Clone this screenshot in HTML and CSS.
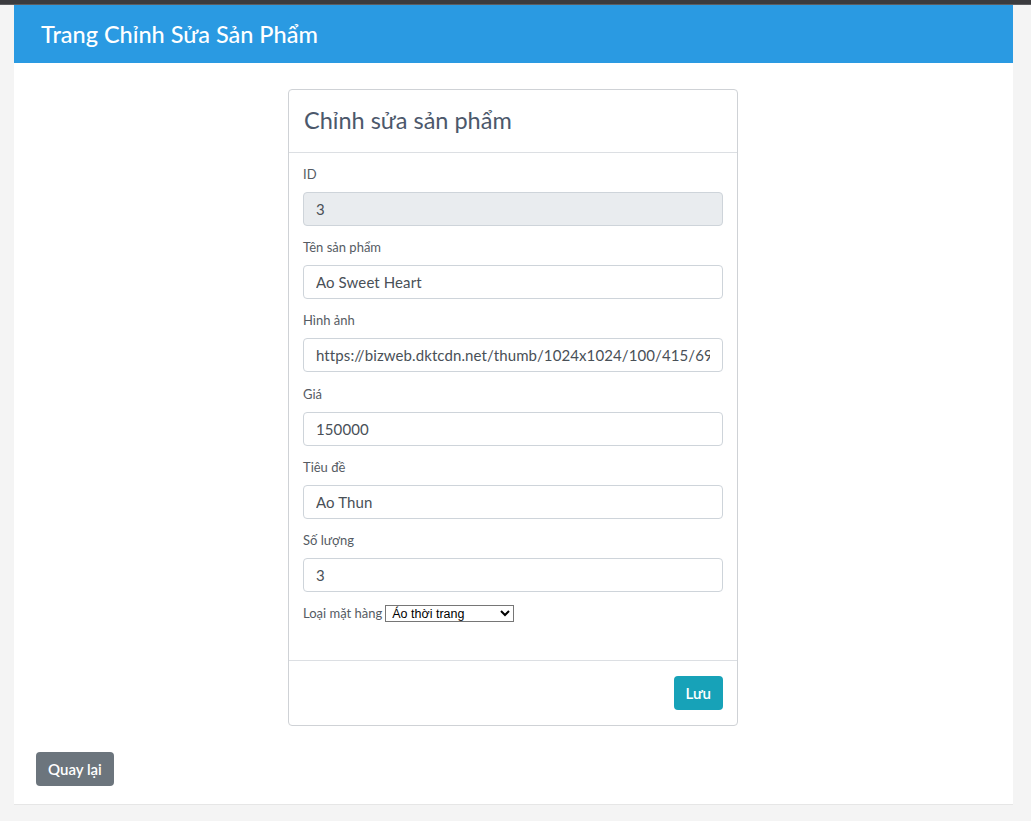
FILE: index.html
```html
<!DOCTYPE html>
<html lang="vi">
<head>
<meta charset="utf-8">
<title>Trang Chỉnh Sửa Sản Phẩm</title>
<link rel="stylesheet" href="styles.css">
</head>
<body>
<div class="topbar"></div>
<div class="page">
  <div class="panel">
    <div class="panel-head">Trang Chỉnh Sửa Sản Phẩm</div>
    <div class="panel-body">
      <form class="card">
        <div class="card-head">Chỉnh sửa sản phẩm</div>
        <div class="card-body">
          <div class="group">
            <label class="lbl">ID</label>
            <input class="field" type="text" value="3" disabled>
          </div>
          <div class="group">
            <label class="lbl">Tên sản phẩm</label>
            <input class="field" type="text" value="Ao Sweet Heart">
          </div>
          <div class="group">
            <label class="lbl">Hình ảnh</label>
            <input class="field" type="text" value="https://bizweb.dktcdn.net/thumb/1024x1024/100/415/690/products/ao.jpg">
          </div>
          <div class="group">
            <label class="lbl">Giá</label>
            <input class="field" type="text" value="150000">
          </div>
          <div class="group">
            <label class="lbl">Tiêu đề</label>
            <input class="field" type="text" value="Ao Thun">
          </div>
          <div class="group">
            <label class="lbl">Số lượng</label>
            <input class="field" type="text" value="3">
          </div>
          <div class="select-row">
            <span class="lbl-inline">Loại mặt hàng</span>
            <select class="sel">
              <option>Áo thời trang</option>
            </select>
          </div>
        </div>
        <div class="card-foot">
          <button type="button" class="btn btn-info">Lưu</button>
        </div>
      </form>
      <div class="back-row">
        <button type="button" class="btn btn-secondary">Quay lại</button>
      </div>
    </div>
  </div>
</div>
</body>
</html>
```
FILE: styles.css
```css
html, body {
  margin: 0;
  padding: 0;
}
body {
  background: #f4f4f4;
  font-family: "Lato", "Open Sans", sans-serif;
  color: #495057;
  min-height: 821px;
}
.topbar {
  height: 4px;
  background: #3b3b3e;
  border-bottom: 1px solid #5d5d60;
}
.page {
  padding: 0 18px 0 14px;
}
.panel {
  background: #fff;
  border-bottom: 1px solid #e6e6e6;
}
.panel-head {
  background: #2a9ae2;
  color: #fff;
  height: 58px;
  line-height: 58px;
  padding-left: 27px;
  font-size: 23.5px;
  font-weight: 500;
}
.panel-body {
  padding: 26px 23px 18px 22px;
}
.card {
  width: 448px;
  margin: 0 auto 26px auto;
  border: 1px solid #cfd2d6;
  border-radius: 4px;
  display: block;
}
.card-head {
  height: 62px;
  line-height: 60px;
  padding-left: 15px;
  font-size: 23.5px;
  color: #4c586b;
  border-bottom: 1px solid #dcdfe3;
}
.card-body {
  padding: 11px 14px 37px 14px;
}
.group {
  display: flex;
  flex-direction: column;
  margin-bottom: 11.2px;
}
.lbl {
  font-size: 13px;
  line-height: 20px;
  color: #555b63;
  margin-bottom: 8px;
}
.field {
  box-sizing: border-box;
  height: 34px;
  width: 100%;
  border: 1px solid #ced4da;
  border-radius: 4px;
  padding: 0 12px;
  font-family: inherit;
  font-size: 15px;
  letter-spacing: 0.1px;
  color: #495057;
  background: #fff;
}
.field:disabled {
  background: #e9ecef;
  color: #495057;
}
.select-row {
  display: flex;
  align-items: center;
  height: 20px;
  margin-top: 3px;
}
.lbl-inline {
  font-size: 13px;
  color: #555b63;
  margin-right: 3px;
}
.sel {
  box-sizing: border-box;
  width: 129px;
  height: 17px;
  font-size: 12.5px;
  font-family: "Liberation Sans", sans-serif;
  border: 1px solid #767676;
  border-radius: 0;
  padding: 0 0 0 2px;
  color: #000;
  background: #fff;
}
.card-foot {
  border-top: 1px solid #dcdfe3;
  padding: 15px 14px 15px 14px;
  display: flex;
  justify-content: flex-end;
}
.btn {
  height: 34px;
  border: none;
  border-radius: 4px;
  color: #fff;
  font-family: inherit;
  font-size: 15px;
  font-weight: 600;
  padding: 0 12px;
  cursor: pointer;
}
.btn-info {
  background: #17a2b8;
}
.btn-secondary {
  background: #6c757d;
}
.back-row {
  display: flex;
}
```
